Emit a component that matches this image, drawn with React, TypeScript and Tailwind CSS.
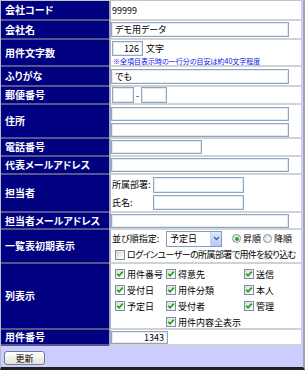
import React from "react";

const inp =
  "border border-[#8fa6bf] bg-white shadow-[inset_0_0_0_1px_#e4eaf2] text-[9px] leading-none flex items-center";

function Row({
  label,
  h,
  children,
}: {
  label: string;
  h: string;
  children?: React.ReactNode;
}) {
  return (
    <div className={`flex ${h}`}>
      <div className="w-[108px] shrink-0 bg-[#000080] text-white font-bold text-[10px] leading-none pl-[4px] flex items-center border-b-2 border-[#56568f]">
        {label}
      </div>
      <div className="flex-1 min-w-0 bg-white border-l-2 border-l-[#a6a6bc] border-b-2 border-b-[#d2d2d2] text-[9px] leading-none text-black">
        {children}
      </div>
    </div>
  );
}

function Cb({ checked }: { checked?: boolean }) {
  return (
    <span className="w-[10px] h-[10px] border border-[#7b8fa9] bg-gradient-to-br from-[#dcdcd4] to-white flex items-center justify-center shrink-0">
      {checked && (
        <svg width="8" height="8" viewBox="0 0 8 8">
          <path d="M1.2 3.8 L3.1 5.8 L6.8 1.6" stroke="#21a121" strokeWidth="1.7" fill="none" />
        </svg>
      )}
    </span>
  );
}

function Radio({ checked }: { checked?: boolean }) {
  return (
    <span className="w-[9px] h-[9px] rounded-full border border-[#7b8fa9] bg-gradient-to-br from-[#dcdcd4] to-white flex items-center justify-center shrink-0">
      {checked && <span className="w-[4px] h-[4px] rounded-full bg-[#2aa52a]" />}
    </span>
  );
}

function CbItem({ text, checked = true }: { text: string; checked?: boolean }) {
  return (
    <div className="flex items-center gap-[2px] h-[16px]">
      <Cb checked={checked} />
      <span>{text}</span>
    </div>
  );
}

export default function App() {
  return (
    <div className="w-[305px] h-[370px] bg-[#ccccff] border-t border-t-[#c4c4cc] border-l border-l-[#b8b8c8] border-r-2 border-r-[#a4a4ac] border-b-[3px] border-b-[#202020] flex flex-col font-['Noto_Sans_CJK_JP',sans-serif] [font-feature-settings:'palt']">
      <div className="w-[300px] flex flex-col">
        <Row label="会社コード" h="h-[20px]">
          <div className="h-full flex items-center pl-[1px]">99999</div>
        </Row>
        <Row label="会社名" h="h-[19px]">
          <div className="h-full flex items-center">
            <div className={`${inp} w-[178px] h-[15px] pl-[3px]`}>デモ用データ</div>
          </div>
        </Row>
        <Row label="用件文字数" h="h-[27px]">
          <div className="flex flex-col pl-[1px]">
            <div className="h-[17px] flex items-center">
              <div className={`${inp} w-[31px] h-[15px] justify-end pr-[3px]`}>126</div>
              <span className="ml-[3px]">文字</span>
            </div>
            <div className="h-[8px] flex items-center text-[7px] text-[#1010f0] pl-[1px] whitespace-nowrap">
              ※全項目表示時の一行分の目安は約40文字程度
            </div>
          </div>
        </Row>
        <Row label="ふりがな" h="h-[20px]">
          <div className="h-full flex items-center">
            <div className={`${inp} w-[178px] h-[15px] pl-[3px]`}>でも</div>
          </div>
        </Row>
        <Row label="郵便番号" h="h-[18px]">
          <div className="h-full flex items-center pl-[1px]">
            <div className={`${inp} w-[22px] h-[16px]`} />
            <span className="mx-[2px]">-</span>
            <div className={`${inp} w-[26px] h-[16px]`} />
          </div>
        </Row>
        <Row label="住所" h="h-[34px]">
          <div className="flex flex-col pt-[2px] gap-[2px]">
            <div className={`${inp} w-[178px] h-[14px]`} />
            <div className={`${inp} w-[178px] h-[14px]`} />
          </div>
        </Row>
        <Row label="電話番号" h="h-[18px]">
          <div className="h-full flex items-center">
            <div className={`${inp} w-[91px] h-[14px]`} />
          </div>
        </Row>
        <Row label="代表メールアドレス" h="h-[18px]">
          <div className="h-full flex items-center">
            <div className={`${inp} w-[178px] h-[14px]`} />
          </div>
        </Row>
        <Row label="担当者" h="h-[38px]">
          <div className="flex flex-col pl-[1px]">
            <div className="h-[19px] flex items-center">
              <span className="w-[41px]">所属部署:</span>
              <div className={`${inp} w-[91px] h-[16px]`} />
            </div>
            <div className="h-[17px] flex items-center">
              <span className="w-[41px]">氏名:</span>
              <div className={`${inp} w-[91px] h-[15px]`} />
            </div>
          </div>
        </Row>
        <Row label="担当者メールアドレス" h="h-[17px]">
          <div className="h-full flex items-center">
            <div className={`${inp} w-[178px] h-[14px]`} />
          </div>
        </Row>
        <Row label="一覧表初期表示" h="h-[34px]">
          <div className="flex flex-col pl-[1px]">
            <div className="h-[17px] flex items-center whitespace-nowrap">
              <span className="w-[54px]">並び順指定:</span>
              <div className="w-[56px] h-[16px] border border-[#7f9db9] bg-white flex items-center">
                <span className="flex-1 pl-[3px]">予定日</span>
                <span className="w-[11px] h-full bg-gradient-to-b from-[#dbe6fd] to-[#b5c9f4] border-l border-[#c3d3fd] flex items-center justify-center">
                  <svg width="7" height="5" viewBox="0 0 7 5">
                    <path d="M1 1 L3.5 3.5 L6 1" stroke="#4d6185" strokeWidth="1.4" fill="none" />
                  </svg>
                </span>
              </div>
              <div className="flex items-center gap-[2px] ml-[10px]">
                <Radio checked />
                <span>昇順</span>
              </div>
              <div className="flex items-center gap-[2px] ml-[2px]">
                <Radio />
                <span>降順</span>
              </div>
            </div>
            <div className="h-[15px] flex items-center gap-[2px] pl-[3px] whitespace-nowrap">
              <Cb />
              <span className="tracking-[-0.6px]">ログインユーザーの所属部署で用件を絞り込む</span>
            </div>
          </div>
        </Row>
        <Row label="列表示" h="h-[66px]">
          <div className="grid grid-cols-[51px_78px_auto] pl-[4px] pt-[2px] whitespace-nowrap">
            <CbItem text="用件番号" />
            <CbItem text="得意先" />
            <CbItem text="送信" />
            <CbItem text="受付日" />
            <CbItem text="用件分類" />
            <CbItem text="本人" />
            <CbItem text="予定日" />
            <CbItem text="受付者" />
            <CbItem text="管理" />
            <div />
            <CbItem text="用件内容全表示" />
            <div />
          </div>
        </Row>
        <Row label="用件番号" h="h-[16px]">
          <div className="h-full flex items-center">
            <div className={`${inp} w-[57px] h-[13px] justify-end pr-[3px]`}>1343</div>
          </div>
        </Row>
      </div>
      <div className="flex-1 pl-[3px] pt-[5px]">
        <button className="w-[41px] h-[14px] border border-[#6c7d94] rounded-[3px] bg-gradient-to-b from-white to-[#e4e2d8] text-[9px] leading-none text-black flex items-center justify-center">
          更新
        </button>
      </div>
    </div>
  );
}
